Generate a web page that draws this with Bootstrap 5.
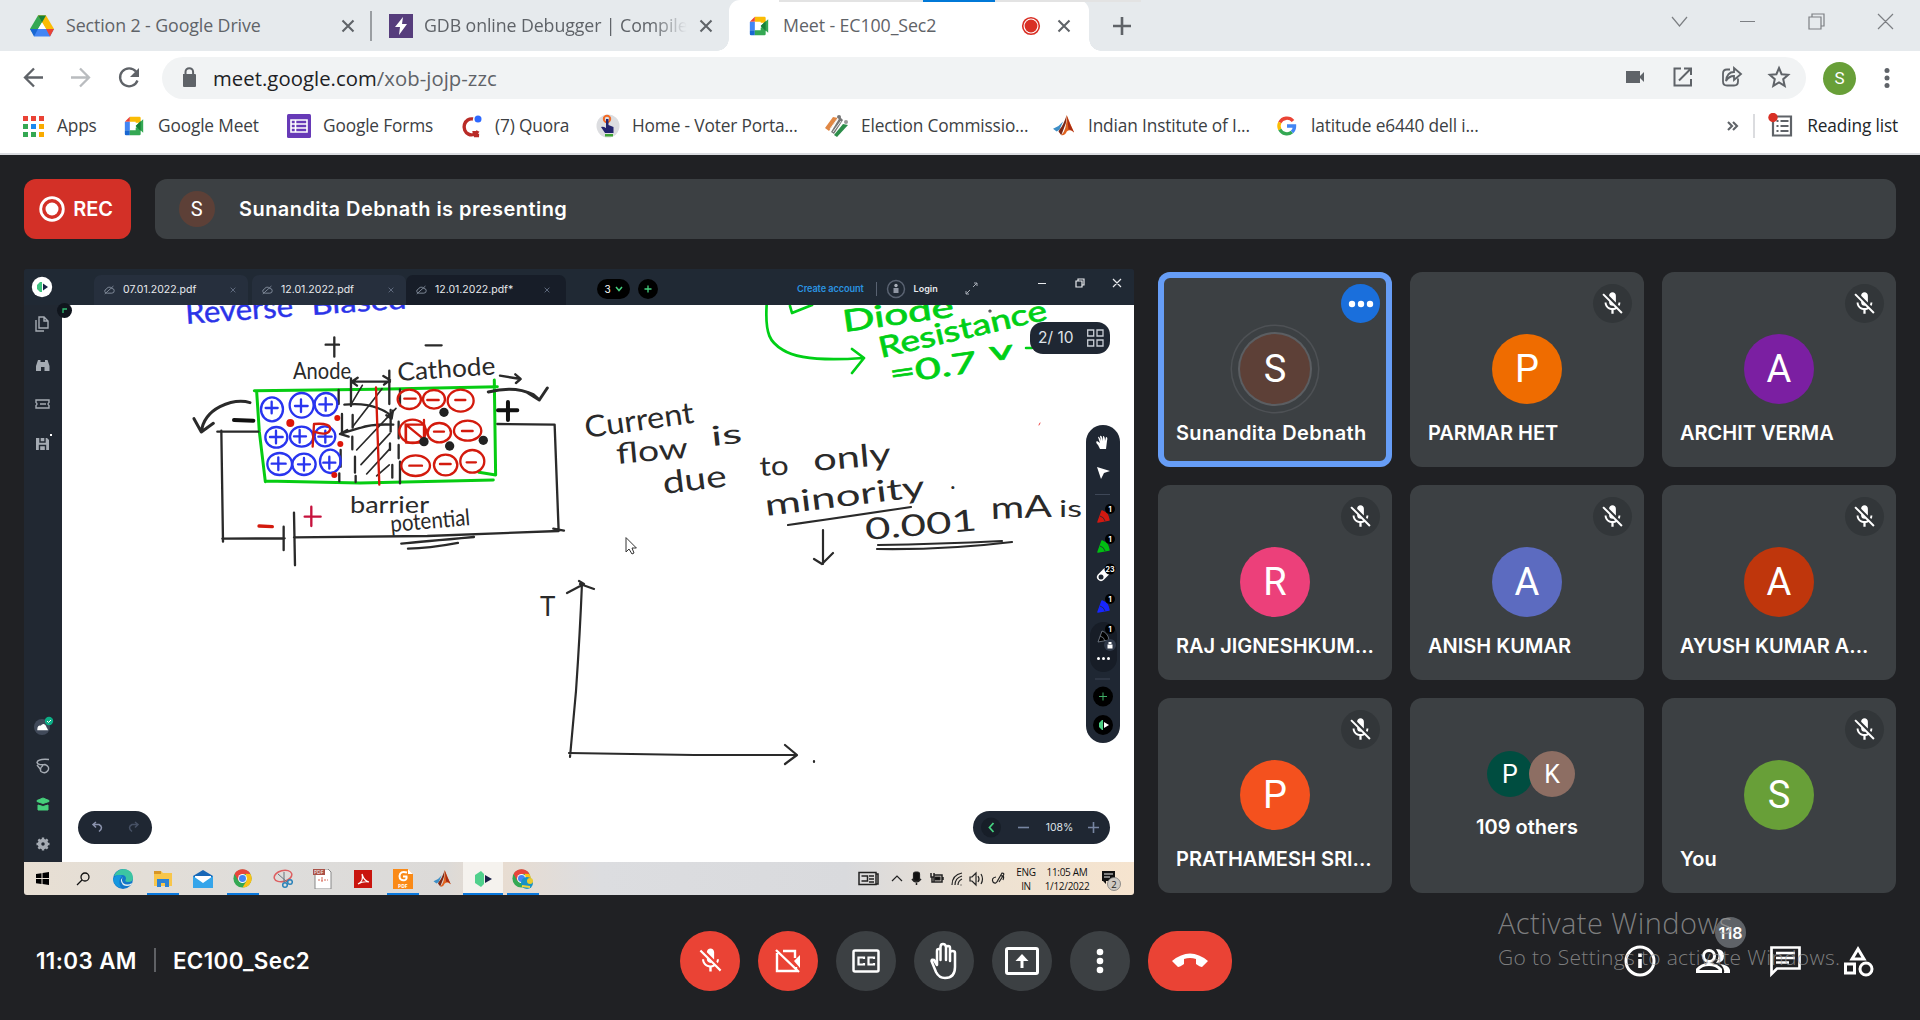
<!DOCTYPE html>
<html lang="en">
<head>
<meta charset="utf-8">
<title>Meet - EC100_Sec2</title>
<link href="https://cdn.jsdelivr.net/npm/bootstrap@5.3.0/dist/css/bootstrap.min.css" rel="stylesheet">
<style>
html,body{height:100%;overflow:hidden}
body{background:#202124;font-family:"Open Sans","Noto Sans",sans-serif;color:#fff}
svg{display:block;flex:none}
.screen{width:1920px;height:1020px}
/* browser chrome */
.tabstrip{height:51px;background:#e6eaed;color:#5f6368;font-size:17.8px;letter-spacing:-.1px}
.btab{height:51px;position:relative;white-space:nowrap}
.t1{width:372px;padding-left:30px}.t2{width:357px;padding-left:17px}
.t3{width:360px;padding-left:18px;background:#fff;border-radius:11px 11px 0 0}
.t3:before,.t3:after{content:"";position:absolute;bottom:0;width:12px;height:12px}
.t3:before{left:-12px;background:radial-gradient(circle at 0 0,#e6eaed 11.5px,#fff 12px)}
.t3:after{right:-12px;background:radial-gradient(circle at 100% 0,#e6eaed 11.5px,#fff 12px)}
.t1 .ttl{width:271px;margin-left:12px}.t2 .ttl{width:271px;margin-left:11px;overflow:hidden;-webkit-mask:linear-gradient(90deg,#000 84%,transparent 97%)}
.t3 .ttl{width:238px;margin-left:12px}
.vsep{width:2px;height:30px;background:#9a9ea2}
.sharebar{position:absolute;left:779px;top:0;width:362px;height:2px;background:linear-gradient(90deg,#e3e3e3 144px,#0078d7 144px,#0078d7 216px,#e3e3e3 216px)}
.toolbar{height:52px;background:#fff;color:#5f6368;padding-top:2px}
.omni{width:1644px;height:42px;border-radius:21px;background:#f1f3f4;font-size:20.3px;letter-spacing:.05px;white-space:nowrap}
.omni b{font-weight:400;color:#202124}
.s33{width:33px;height:33px;margin-left:17px;font:17px Roboto,sans-serif;background:#689f38}
.bmarks{height:52px;background:#fff;border-bottom:2px solid #dadce0;color:#3c4043;font-size:17.3px;letter-spacing:-.15px;padding-left:21px;padding-bottom:4px}
.bm{gap:12px;white-space:nowrap}
.bm:nth-child(1){width:101px}.bm:nth-child(2){width:165px}.bm:nth-child(3){width:172px}.bm:nth-child(4){width:137px}
.bm:nth-child(5){width:229px}.bm:nth-child(6){width:227px}.bm:nth-child(7){width:223px}.bm:nth-child(8){width:440px}
.rlist{margin-right:22px}
/* meeting */
.meet{height:865px;font-family:Inter,"Noto Sans",sans-serif}
.notice{height:60px;margin:24px 24px 0;gap:24px;font-size:20px;font-weight:600}
.rec{width:107px;border-radius:12px;background:#d33027;gap:8px;letter-spacing:-.1px;padding-right:3px}
.presenting{border-radius:12px;background:#3c4043;letter-spacing:.44px}
.s36{width:36px;height:36px;background:#5d4037;font:20px Roboto,sans-serif}
.stage{height:626px;margin:30px 24px 0}
.share{width:1110px;height:626px;background:#212832;color:#dfe3e8;border-radius:3px;overflow:hidden}
.apphead{height:36px;background:#202934}
.ftab{width:154px;height:30px;background:#262f3d;border-radius:7px 7px 0 0;font-size:10.5px;color:#e8eaed;padding:0 12px 0 10px}
.ftab.on{width:160px;background:#171d28}
.pill3{width:33px;height:20px;border-radius:10px;background:#000;font-size:10px;color:#fff;margin-left:31px}
.acct{margin-left:139px;font-size:9.200px;font-weight:600;color:#2a93e0;letter-spacing:-.1px}
.login{font-size:9px;font-weight:600;color:#e8eaed;margin-left:4px}
.rail{width:38px;height:557px;background:#212832;color:#a5abb3}
.board{width:1072px;height:557px;background:#fff;position:relative;overflow:hidden}
.board .ink{position:absolute;left:0;top:0}
.float{position:absolute;background:#1f2733;border-radius:18px;z-index:2}
.f-undo{left:16px;top:506px;width:74px;height:33px}
.f-zoom{left:911px;top:506px;width:137px;height:33px;font-size:10.5px}
.f-page{left:968px;top:17px;width:80px;height:32px;border-radius:13px;font-size:15.5px;letter-spacing:0}
.f-tools{left:1024px;top:120px;width:34px;height:318px}
.corner{position:absolute;left:33px;top:34px;width:15px;height:15px;background:#10151d;z-index:3}
.taskbar{height:33px;background:linear-gradient(90deg,#e8dfd3 0,#dedddb 22%,#dcdad8 38%,#e9dccf 42%,#dcdde0 52%,#d9dadd 74%,#eee2d2 88%,#f6e4cf 100%);color:#111;font:10px/14px "Open Sans",sans-serif}
.tb{width:40px;height:33px;position:relative}
.tb:first-child{width:37px;margin-right:1.500px}
.tb.run:after{content:"";position:absolute;left:4px;right:4px;bottom:0;height:2px;background:#0a78dd}
.tb.act{background:#f5f2ee}.tb.act:after{left:0;right:0}
.tray{letter-spacing:-.3px}
.lang{width:28px}.tm{width:54px}
/* people */
.tiles{width:738px;height:621px;margin-top:3px;display:grid;grid-template-columns:repeat(3,234px);grid-template-rows:repeat(3,195px);gap:18px}
.tile{background:#3c4043;border-radius:12px;position:relative}
.tile.talk{box-shadow:inset 0 0 0 6px #669df6}
.av{width:70px;height:70px;font:38px Roboto,sans-serif;margin-top:62px}
.talk .av{box-shadow:0 0 0 2px #5b5e62,0 0 0 8px #3c4043,0 0 0 9.5px #4e5155}
.talk .nm{letter-spacing:.36px}
.nm{position:absolute;left:18px;right:8px;top:146px;font-size:20px;line-height:30px;font-weight:600;white-space:nowrap}
.corn{position:absolute;right:12px;top:12px;width:39px;height:39px;background:#323639}
.pair{margin-top:53px;margin-left:4px}
.mini{width:46px;height:46px;font:25px Roboto,sans-serif;margin-right:-4px}
.oth{font-size:20px;font-weight:600;line-height:30px;margin-top:15px}
.c-brown{background:#5d4037}.c-orange{background:#ef6c00}.c-violet{background:#7b1fa2}.c-pink{background:#ec407a}.c-indigo{background:#5c6bc0}.c-rust{background:#bf360c}.c-deep{background:#f4511e}.c-green{background:#689f38}.c-teal{background:#004d40}.c-tan{background:#8d6e63}.c-blue{background:#1a6fdc}
/* call controls */
.callbar{height:125px;position:relative;padding-top:6px}
.clock{width:680px;padding-left:36px;font-size:22.4px;font-weight:600;letter-spacing:.4px}
.ctrls{gap:18px}
.ctl{width:60px;height:60px;background:#3c4043}
.ctl.off{background:#ea4335}
.hang{width:84px;height:60px;border-radius:29px;background:#ea4335}
.side{width:251px;margin-right:46px;gap:38px}
.cnt{position:absolute;left:1715px;top:22px;width:31px;height:31px;background:#5f6368;font-size:16px;font-weight:600}
.wm{position:absolute;left:1498px;top:6px;color:rgba(158,158,158,.76);font-family:"Open Sans",sans-serif;font-weight:300;z-index:5;white-space:nowrap}
.wm1{font-size:29px;line-height:44px;letter-spacing:.45px}.wm2{font-size:21px;line-height:24px;letter-spacing:.32px}
.hw{font-family:Lato,"Open Sans",sans-serif}
</style>
<script src="https://cdn.jsdelivr.net/npm/bootstrap@5.3.0/dist/js/bootstrap.bundle.min.js"></script>
</head>
<body>
<svg width="0" height="0" class="position-absolute">
<defs>
<symbol id="x" viewBox="0 0 14 14"><path d="M1.5 1.5l11 11m0-11l-11 11" stroke="currentColor" stroke-width="2.1" fill="none"/></symbol>
<symbol id="gmeet" viewBox="0 0 24 24"><path d="M7 1h11.500q1.500 0 1.500 1.500V8h-6V7H7z" fill="#fbbc04"/><path d="M7 1v6H1z" fill="#ea4335"/><path d="M1 7h6v10H1z" fill="#4285f4"/><path d="M1 17h6v6H2.500Q1 23 1 21.500z" fill="#1967d2"/><path d="M7 17h7v-3l4-2 2 3v6.500q0 1.500-1.500 1.500H7z" fill="#34a853"/><path d="M14 12l9-8v16z" fill="#34a853"/><path d="M14 12l6-6v12z" fill="#188038"/></symbol>
<symbol id="micoff" viewBox="0 0 24 24"><path fill="currentColor" d="M19 11h-1.700c0 .74-.16 1.430-.43 2.050l1.230 1.230c.56-.98.9-2.090.9-3.280zm-4.020.170c0-.060.020-.11.020-.170V5c0-1.660-1.340-3-3-3S9 3.340 9 5v.180l5.980 5.990zM4.270 3L3 4.270l6.010 6.010V11c0 1.660 1.330 3 2.990 3 .22 0 .44-.030.65-.080l1.660 1.660c-.71.330-1.500.52-2.310.52-2.760 0-5.300-2.100-5.300-5.100H5c0 3.410 2.720 6.230 6 6.720V21h2v-3.280c.91-.13 1.770-.45 2.540-.9L19.730 21 21 19.730 4.270 3z"/></symbol>
<symbol id="matlab" viewBox="0 0 24 24"><path d="M0 15l6-3 5-5-4 9-3 2z" fill="#3d8fc7"/><path d="M7 16q4-4 8-16l-1 9-5 13-3-4z" fill="#7c2817"/><path d="M9 22q6-5 6-22 3 8 8 19-4-4-8-1-2 5-6 4z" fill="#e0621f"/><path d="M15 1q3 8 8 18-4-4-6-3z" fill="#a92c13"/></symbol>
<symbol id="chrome" viewBox="0 0 24 24"><circle cx="12" cy="12" r="11.500" fill="#34a853"/><path d="M2 6.200A11.500 11.500 0 0122 6.200H12L7 15z" fill="#e8453c"/><path d="M22 6.200A11.500 11.500 0 0112 23.500l5-8.500-1-9z" fill="#fbc116"/><circle cx="12" cy="12" r="5.600" fill="#fff"/><circle cx="12" cy="12" r="4.400" fill="#4285f4"/></symbol>
<symbol id="cloudoff" viewBox="0 0 14 12"><path d="M4 10h6a3 3 0 000-6 4 4 0 00-7 1 2.500 2.500 0 001 5zM1 11L12 1" fill="none" stroke="#8b95a5" stroke-width="1.100"/></symbol>
</defs></svg>

<div class="screen d-flex flex-column">
<header class="position-relative">
 <div class="tabstrip d-flex align-items-center">
  <div class="btab t1 d-flex align-items-center">
   <svg width="24" height="22" viewBox="0 0 24 21"><path d="M8 0h8L4.500 20 0 13.500z" fill="#34a853"/><path d="M8 0h8l8 13.500h-8z" fill="#fbbc04"/><path d="M8 0h8l-4 7z" fill="#188038"/><path d="M4.500 13.500H24L20 21H4z" fill="#4285f4"/><path d="M16 13.500h8L20 21z" fill="#ea4335"/><path d="M0 13.500h8L4 21z" fill="#1967d2"/><path d="M12 7l4 6.500H8z" fill="#fff"/></svg>
   <span class="ttl">Section 2 - Google Drive</span>
   <svg class="ms-1" width="14" height="14"><use href="#x"/></svg><span class="vsep ms-auto"></span>
  </div>
  <div class="btab t2 d-flex align-items-center">
   <svg width="24" height="24"><path d="M0 0h24v24H0z" fill="#563d7c"/><path d="M14 3L6 13h5l-1 8 8-11h-5z" fill="#fff"/></svg>
   <span class="ttl">GDB online Debugger | Compiler</span>
   <svg class="ms-1" width="14" height="14"><use href="#x"/></svg>
  </div>
  <div class="btab t3 d-flex align-items-center">
   <svg width="24" height="20"><use href="#gmeet"/></svg><span class="ttl">Meet - EC100_Sec2</span>
   <svg width="20" height="20"><circle cx="10" cy="10" r="8.300" fill="#fff" stroke="#d93025" stroke-width="1.600"/><circle cx="10" cy="10" r="6.400" fill="#d93025"/></svg>
   <svg class="ms-3" width="14" height="14"><use href="#x"/></svg>
  </div>
  <svg class="ms-4" width="18" height="18"><path d="M9 0v18M0 9h18" stroke="#5f6368" stroke-width="2.600"/></svg>
  <svg class="ms-auto me-3" width="240" height="30" fill="none" stroke="#7c7f83" stroke-width="1.200"><path d="M8 6l7.500 9L23 6M76 10.500h15M145 6h12v12h-12zM148 6V3h12v12h-3M214 3l15 15M229 3l-15 15"/></svg>
 </div>
 <div class="sharebar"></div>
 <div class="toolbar d-flex align-items-center">
  <svg width="162" height="42" fill="none" stroke="#5f6368" stroke-width="2.300"><path d="M43 20.500H25m9-9l-9 9 9 9"/><path d="M71 20.500h18m-9-9l9 9-9 9" stroke="#b9bcbf"/><path d="M136 14.500a9 9 0 10 1.500 9"/><path d="M139 11v9h-9z" fill="#5f6368" stroke="none"/></svg>
  <div class="omni d-flex align-items-center">
   <svg width="51" height="42"><path d="M21 17h12q1 0 1 1v11q0 1-1 1H22q-1 0-1-1z" fill="#5f6368"/><path d="M23.500 18v-3a3.800 3.800 0 017.600 0v3" fill="none" stroke="#5f6368" stroke-width="2"/></svg>
   <span><b>meet.google.com</b>/xob-jojp-zzc</span>
   <svg class="ms-auto" width="190" height="42" fill="none" stroke="#5f6368" stroke-width="2"><path d="M10 14h14v5l4-4v10l-4-4v5H10z" fill="#5f6368" stroke="none"/><path d="M65 11.500h-6.500v17H75V22M68 11.500h7V18M75 11.500l-12 12"/><path d="M114 12.500h-3q-4 0-4 4v8q0 4 4 4h7q4 0 4-4v-3M110 24q1-9 8-9v-4l7 6-7 6v-4q-5 0-8 5z" stroke-width="1.800"/><path d="M163 11l2.600 6.200 6.600.6-5 4.400 1.500 6.600-5.700-3.500-5.700 3.500 1.500-6.600-5-4.400 6.600-.6z"/></svg>
  </div>
  <div class="s33 rounded-circle d-flex align-items-center justify-content-center text-white">S</div>
  <svg class="ms-4" width="16" height="24" fill="#5f6368"><circle cx="7" cy="4.500" r="2.500"/><circle cx="7" cy="12" r="2.500"/><circle cx="7" cy="19.500" r="2.500"/></svg>
 </div>
 <nav class="bmarks d-flex align-items-center">
  <div class="bm d-flex align-items-center"><svg width="24" height="22"><path d="M2 1h5v5H2zM10 1h5v5h-5zM18 1h5v5h-5z" fill="#ea4335"/><path d="M2 9h5v5H2zM2 17h5v5H2zM10 17h5v5h-5z" fill="#34a853"/><path d="M10 9h5v5h-5z" fill="#1a88f0"/><path d="M18 9h5v5h-5zM18 17h5v5h-5z" fill="#f9ab00"/></svg>Apps</div>
  <div class="bm d-flex align-items-center"><svg width="24" height="20"><use href="#gmeet"/></svg>Google Meet</div>
  <div class="bm d-flex align-items-center"><svg width="24" height="24"><rect width="24" height="24" rx="1.500" fill="#673ab7"/><path d="M4 6h16v12H4zM4 10h16M4 14h16M8.500 6v12" fill="none" stroke="#fff" stroke-width="1.600"/></svg>Google Forms</div>
  <div class="bm d-flex align-items-center"><svg width="24" height="24"><path d="M14 5A7.500 8 0 1019 17M15 17q0 4 5 4.500h-5" fill="none" stroke="#b92b27" stroke-width="3.400"/><circle cx="19" cy="5" r="3.500" fill="#2e69ff"/></svg>(7) Quora</div>
  <div class="bm d-flex align-items-center"><svg width="24" height="24"><circle cx="12" cy="12" r="11.500" fill="#dcdde0"/><circle cx="11" cy="5" r="3.200" fill="none" stroke="#f26a25" stroke-width="2"/><path d="M10 5h2.500v6l5 2v6H9l-4-6q2-1 5 1z" fill="#23246e"/><path d="M9 20h8v2.500H9z" fill="#3fa535"/></svg>Home - Voter Porta...</div>
  <div class="bm d-flex align-items-center"><svg width="24" height="24"><path d="M0 14L8 3l5 1-9 13z" fill="#e08744"/><path d="M6 18L15 3l3 3-9 14z" fill="#777"/><path d="M9 21l9-11 5 1-11 12z" fill="#2c8d4a"/><circle cx="14" cy="3" r="2" fill="#777"/><circle cx="21" cy="8" r="2" fill="#999"/><path d="M5 15L13 4M8 18l8-11" stroke="#eee"/></svg>Election Commissio...</div>
  <div class="bm d-flex align-items-center"><svg width="24" height="22"><use href="#matlab"/></svg>Indian Institute of I...</div>
  <div class="bm d-flex align-items-center"><svg width="24" height="20" viewBox="0 0 24 20" fill="none" stroke-width="3.400"><path d="M18 5a8 8 0 00-13.200 1.500" stroke="#ea4335"/><path d="M4.800 6.500a8 8 0 000 7" stroke="#fbbc04"/><path d="M4.800 13.500A8 8 0 0017 16" stroke="#34a853"/><path d="M17 16a8 8 0 002.500-6H12" stroke="#4285f4"/></svg>latitude e6440 dell i...</div>
  <svg width="38" height="24" fill="none" stroke="#5f6368" stroke-width="2.100"><path d="M13 8l4 4-4 4M18 8l4 4-4 4"/></svg>
  <svg width="42" height="26"><path d="M1 1v24" stroke="#cfd1d4" stroke-width="1.500"/><path d="M20 3.500h18v19H20z" fill="none" stroke="#5f6368" stroke-width="2.200"/><path d="M23.500 8h2m2 0h8M23.500 13h2m2 0h8M23.500 18h2m2 0h8" stroke="#5f6368" stroke-width="2"/><circle cx="20" cy="4.500" r="4.700" fill="#d93025"/></svg>
  <span class="rlist ms-auto text-dark">Reading list</span>
 </nav>
</header>

<main class="meet d-flex flex-column">
 <div class="notice d-flex">
  <div class="rec d-flex align-items-center justify-content-center"><svg width="26" height="26"><circle cx="13" cy="13" r="11.300" fill="none" stroke="#fff" stroke-width="2.800"/><circle cx="13" cy="13" r="6.500" fill="#fff"/></svg>REC</div>
  <div class="presenting d-flex align-items-center flex-grow-1 ps-4"><span class="s36 rounded-circle d-flex align-items-center justify-content-center">S</span><span class="ms-4">Sunandita Debnath is presenting</span></div>
 </div>
 <div class="stage d-flex justify-content-between">
  <section class="share d-flex flex-column position-relative">
   <div class="apphead d-flex align-items-end">
    <svg width="70" height="36"><circle cx="18" cy="18" r="10.200" fill="#fff"/><path d="M13 16l3-3h2v10h-2l-3-3z" fill="#3fc380"/><path d="M19 14.500l5 3.500-5 3.500z" fill="#172044"/></svg>
    <div class="ftab d-flex align-items-center"><svg class="me-2" width="11" height="10"><use href="#cloudoff"/></svg>07.01.2022.pdf<svg class="ms-auto" width="6" height="6" color="#657184"><use href="#x"/></svg></div>
    <div class="ftab d-flex align-items-center ms-1"><svg class="me-2" width="11" height="10"><use href="#cloudoff"/></svg>12.01.2022.pdf<svg class="ms-auto" width="6" height="6" color="#657184"><use href="#x"/></svg></div>
    <div class="ftab on d-flex align-items-center"><svg class="me-2" width="11" height="10"><use href="#cloudoff"/></svg>12.01.2022.pdf*<svg class="ms-auto me-1" width="6" height="6" color="#657184"><use href="#x"/></svg></div>
    <div class="d-flex align-items-center flex-grow-1 h-100 pt-1">
     <span class="pill3 d-flex align-items-center justify-content-center">3<svg class="ms-1" width="8" height="6"><path d="M1 1l3 3.500L7 1" fill="none" stroke="#46d17f" stroke-width="1.500"/></svg></span>
     <svg class="ms-2" width="20" height="20"><circle cx="10" cy="10" r="10"/><path d="M10 6.500v7M6.500 10h7" stroke="#46d17f" stroke-width="1.300"/></svg>
     <span class="acct">Create account</span>
     <svg width="46" height="24" fill="none" stroke="#596271"><path d="M12.500 5v14"/><circle cx="32" cy="12" r="8.500" stroke-width="1.500"/><circle cx="32" cy="8.500" r="1.700" fill="#aab0ba" stroke="none"/><path d="M29.500 16v-5h5v5z" fill="#8f96a3" stroke="none"/></svg>
     <span class="login">Login</span>
     <svg class="ms-auto" width="184" height="36" fill="none" stroke="#a7adb6"><path d="M23 16l4-4m-3 0h3v3M20 19l-4 4m3 0h-3v-3"/><path stroke="#e8eaed" d="M88 12.500h8M126 10h6v6h-6zM128 10V8h6v6h-2M163 8l8 8m0-8l-8 8" stroke-width="1.200"/></svg>
    </div>
   </div>
   <div class="d-flex">
    <svg class="rail" viewBox="0 0 38 557" fill="none" stroke="#a5abb3" stroke-width="1.400"><path d="M12 15v11h8M15 12h5l4 4v7h-9zM20 12v4h4"/><path d="M14 55h2.500v2H21v-2h2.500l2 6v5h-5v-4h-3.500v4h-5v-5z" fill="#a5abb3" stroke="none"/><path d="M12 95h13v2.500q-2 1.500 0 3v2.500H12v-2.500q2-1.500 0-3zM16 99h6"/><path d="M12 133h11l2 2v10H12z" fill="#a5abb3" stroke="none"/><path d="M16 133v4h5v-4M15.500 145v-4.500h6v4.500" stroke="#212832"/><path d="M26 130h2" stroke="#fff" stroke-width="1.800"/>
    <circle cx="18" cy="422" r="8" fill="#414a5a" stroke="none"/><path d="M14 424.500q0-4 3-3 3-4 5 1l1 2z" fill="#fff" stroke="#fff"/><circle cx="25" cy="416" r="4.200" fill="#0cae86" stroke="none"/><path d="M23 416l1.500 1.500L27 415" stroke="#fff" stroke-width="1"/><path d="M25 454.500q-11-1-12 3 1 3 8 2 5 2 3 6-3 4-7 1-2-3 2-6M13 460l4 5" /><path d="M13 495.500l6-2.500 6 2.500v1l-6 2-6-2zM14 500l5 1.500 5-1.500v5H14z" fill="#46cf7b" stroke="#46cf7b" stroke-width="1"/><circle cx="19" cy="539" r="3.500" stroke-width="3.500"/><path d="M19 532.500v3M19 542.500v3M12.500 539h3M22.500 539h3M14.400 534.400l2 2M21.600 541.600l2 2M23.600 534.400l-2 2M14.400 543.600l2-2" stroke-width="2.400"/></svg>
    <div class="board">
     <svg class="ink" width="1072" height="557" viewBox="62 305 1072 557" fill="none" stroke="#2a2a2a" stroke-width="2.200" stroke-linecap="round" stroke-linejoin="round">
      <g class="hw" stroke="none">
       <g fill="#2b33e8" stroke="#2b33e8" stroke-width=".4"><text transform="translate(186 324) rotate(-4)" font-size="30" textLength="108" lengthAdjust="spacingAndGlyphs">Reverse</text><text transform="translate(312 315) rotate(-4)" font-size="27" textLength="95" lengthAdjust="spacingAndGlyphs">Biased</text></g>
       <g fill="#2a2a2a"><text x="293" y="379" font-size="23" textLength="58" lengthAdjust="spacingAndGlyphs">Anode</text><text transform="translate(398 381) rotate(-4)" font-size="25" textLength="98" lengthAdjust="spacingAndGlyphs">Cathode</text><text x="350" y="513" font-size="24" textLength="79" lengthAdjust="spacingAndGlyphs">barrier</text><text transform="translate(391 532) rotate(-5)" font-size="23" textLength="80" lengthAdjust="spacingAndGlyphs">potential</text>
       <text transform="translate(586 438) rotate(-8)" font-size="30" textLength="110" lengthAdjust="spacingAndGlyphs">Current</text><text transform="translate(617 464) rotate(-5)" font-size="29" textLength="72" lengthAdjust="spacingAndGlyphs">flow</text><text transform="translate(712 446) rotate(-6)" font-size="27" textLength="31" lengthAdjust="spacingAndGlyphs">is</text><text transform="translate(664 494) rotate(-7)" font-size="31" textLength="64" lengthAdjust="spacingAndGlyphs">due</text><text transform="translate(760 476) rotate(-3)" font-size="27" textLength="29" lengthAdjust="spacingAndGlyphs">to</text><text transform="translate(814 471) rotate(-5)" font-size="31" textLength="78" lengthAdjust="spacingAndGlyphs">only</text><text transform="translate(766 516) rotate(-7)" font-size="30" textLength="161" lengthAdjust="spacingAndGlyphs">minority</text><text x="950" y="489" font-size="24">.</text><text transform="translate(866 540) rotate(-5)" font-size="30" textLength="112" lengthAdjust="spacingAndGlyphs">0.001</text><text transform="translate(991 519) rotate(-2)" font-size="31" textLength="61" lengthAdjust="spacingAndGlyphs">mA</text><text x="1059" y="517" font-size="24" textLength="23" lengthAdjust="spacingAndGlyphs">is</text><text x="540" y="616" font-size="26">T</text></g>
       <g fill="#00cf16" stroke="#00cf16" stroke-width=".7"><text transform="translate(844 332) rotate(-8)" font-size="30" textLength="112" lengthAdjust="spacingAndGlyphs">Diode</text><text transform="translate(881 358) rotate(-13)" font-size="29" textLength="172" lengthAdjust="spacingAndGlyphs">Resistance</text><text transform="translate(891 384) rotate(-8)" font-size="29" textLength="88" lengthAdjust="spacingAndGlyphs">=0.7</text><text transform="translate(990 361) rotate(-6)" font-size="27" textLength="24" lengthAdjust="spacingAndGlyphs">v</text></g>
      </g>
      <!-- diode block and circuit -->
      <g transform="translate(160 300) scale(.3333)" stroke-width="7">
       <path d="M283 272L650 268 1012 260M290 275l8 120 18 150M316 543L600 549 1000 540M1003 240l4 285-50-8" stroke="#06cc12" stroke-width="9"/>
       <path d="M497 134h40M523 112v58M797 136h48M1020 227l62 10-16-14M1082 237l-14 12M573 235v83M575 245h115M575 245l18-12M575 245l16 12M690 240l-20-12M690 240l-18 14M688 212v100M536 270v42M546 342v60M542 450v50M538 520v24M578 345v38M577 410v38M585 470v48M587 528v18M720 268v48M692 330v65M716 365v50M690 430v20M716 435v40M697 495v38M720 485v65"/>
       <path d="M575 310l32-54M578 380l88-114M590 450L708 325M603 494L690 400M620 522L690 446M650 528L688 495" stroke-width="5"/>
       <path d="M553 314q60-6 100 10 40 15 42 32l-16-10M695 356l4-24M700 374q-65-3-100 10l-60 18 22-12M540 402l26 8"/>
       <path d="M270 308q-40-12-90 12-50 26-56 76l-22-40M124 396l36-26M985 276q80-20 135 8l18 16-38-24M1138 300l24-36" stroke-width="9"/>
       <path d="M222 360l58 2M1014 331h58M1044 306v54" stroke="#111" stroke-width="12"/>
       <path d="M295 395H172M184 392l5 333M187 716l187-1M371 680v70M402 638l3 158M402 712l400-4 394-15M1012 372l172 2 12 318M1180 686l32 6M724 731q60-6 218-20M744 746q60 0 150-17"/>
       <g stroke="#2935ef"><ellipse cx="336" cy="328" rx="33" ry="36"/><ellipse cx="425" cy="316" rx="36" ry="37"/><ellipse cx="498" cy="313" rx="34" ry="34"/><ellipse cx="349" cy="412" rx="33" ry="31"/><ellipse cx="425" cy="410" rx="35" ry="30"/><ellipse cx="495" cy="409" rx="31" ry="30"/><ellipse cx="359" cy="492" rx="37" ry="33"/><ellipse cx="432" cy="493" rx="35" ry="32"/><ellipse cx="511" cy="484" rx="31" ry="35"/>
       <path d="M317 324h36M335 305v35M405 318h38M423 298v38M478 313h38M497 294v38M330 411h38M348 392v38M402 409h36M419 390v38M475 410h40M496 392v36M335 491h42M355 472v38M414 493h36M432 474v38M490 488h36M508 470v36"/></g>
       <g stroke="#d31a0d"><ellipse cx="748" cy="298" rx="35" ry="29"/><ellipse cx="822" cy="298" rx="33" ry="28"/><ellipse cx="902" cy="302" rx="39" ry="33"/><ellipse cx="758" cy="394" rx="40" ry="35"/><ellipse cx="838" cy="398" rx="35" ry="29"/><ellipse cx="923" cy="392" rx="41" ry="30"/><ellipse cx="767" cy="497" rx="43" ry="31"/><ellipse cx="857" cy="495" rx="35" ry="31"/><ellipse cx="937" cy="484" rx="36" ry="34"/><path d="M733 296h34M802 300h34M886 300h30M822 395h30M906 393h32M748 497h38M840 492h32M920 487h28M737 425v-52l55 45v-58M738 374h55v54h-55zM648 262l10 292M458 440l4-68q54-4 48 18-8 18-46 6"/></g>
       <path d="M434 650h48M454 620v58" stroke="#c6123d" stroke-width="7"/><path d="M297 678l40 2" stroke="#d31a0d" stroke-width="10"/>
       <g fill="#dd150a" stroke="none"><circle cx="391" cy="369" r="12"/><circle cx="532" cy="354" r="9"/><circle cx="541" cy="432" r="9"/><circle cx="523" cy="525" r="9"/></g>
       <g fill="#222" stroke="none"><circle cx="852" cy="337" r="14"/><circle cx="792" cy="425" r="14"/><circle cx="869" cy="438" r="14"/><circle cx="970" cy="421" r="14"/></g>
      </g>
      <!-- rule lines, arrows and axes -->
      <path d="M788 525q50-7 123-18M823 530v34M814 559l8 5 11-11M877 549q70 1 135-7M878 545q60-1 124-4"/>
      <path d="M767 300c-3 36 4 43 16 50 14 9 40 11 80 8M852 349l12 9-12 15M790 306l2 7 20-8" stroke="#00cf16" stroke-width="2.700"/><path d="M1026 348h6" stroke="#00cf16" stroke-width="2.500"/>
      <path d="M582 583q-2 50-6 108l-6 66M567 593l17-9-5-3M580 584l14 5M569 753l125 2 101 0M785 745l12 10-12 9M814 761v1"/>
      <path d="M626 538v14l3-3 3 5 2-1-2-5h4z" fill="#fff" stroke="#333" stroke-width="1"/><path d="M1039 425l1-2" stroke="#e44" stroke-width="1"/><circle cx="990" cy="311" r=".5"/>
     </svg>
     <div class="float f-undo"><svg width="74" height="33" fill="none" stroke="#8b93ad" stroke-width="1.500"><path d="M16 13.500h5q5 3 0 7M18 11l-3 2.500 3 3"/><path d="M59 13.500h-5q-5 3 0 7M57 11l3 2.500-3 3" stroke="#465064"/></svg></div>
     <div class="float f-zoom d-flex align-items-center"><svg width="64" height="33" fill="none"><circle cx="18" cy="16.500" r="10" fill="#171e28"/><path d="M20.500 12l-4 4.500 4 4.500" stroke="#46d17f" stroke-width="1.800"/><path d="M45 16.500h11" stroke="#7785a2" stroke-width="1.600"/></svg><span class="ms-auto">108%</span><svg class="ms-auto" width="28" height="33"><path d="M6 16.500h11M11.500 11v11" stroke="#7785a2" stroke-width="1.600"/></svg></div>
     <div class="float f-page d-flex align-items-center justify-content-between ps-2"><span>2/ 10</span><svg class="me-1" width="19" height="18" fill="none" stroke="#c9ced6" stroke-width="1.300"><path d="M.7 1h6v6h-6zM10 1h6v6h-6zM.7 11h6v6h-6zM10 11h6v6h-6z"/></svg></div>
     <div class="float f-tools"><svg width="34" height="318" viewBox="0 0 34 318">
      <path d="M12 20q-3-3-1-4l3 2-2-6q1-1 3 4l-1-5q2-1 3 5V11q2 0 2 5l1-4q2 0 1 4l-1 8h-6z" fill="#fff"/><path d="M11 42l13 4-6 2-3 6z" fill="#fff"/><path d="M9 69.500h15M9 254h15" stroke="#3e4757"/>
      <g stroke-width="1.500" stroke-linejoin="round"><path d="M16 86q6 2 7 9l-11 2z" fill="#d21911" stroke="#d21911"/><path d="M16 116q6 2 7 9l-11 2z" fill="#00be12" stroke="#00be12"/><path d="M16 176q6 2 7 9l-11 2z" fill="#1726ff" stroke="#1726ff"/></g>
      <path d="M14 91q4 1 5 5M14 121q4 1 5 5M14 181q4 1 5 5" fill="none" stroke="#1f2733" stroke-width=".8"/>
      <path d="M15 152l5-5" stroke="#fff" stroke-width="8" stroke-linecap="round"/><circle cx="15" cy="152" r="2.500" fill="#1f2733"/>
      <rect x="4" y="197" width="27" height="50" rx="13.500" fill="#171d27"/><path d="M16 206q6 2 7 9l-11 2zM14 211q4 1 5 5" fill="#000" stroke="#7b8491" stroke-width=".8"/>
      <g fill="#000"><circle cx="24" cy="84" r="5"/><circle cx="24" cy="114" r="5"/><circle cx="24" cy="144" r="5.500"/><circle cx="24" cy="174" r="5"/><circle cx="24" cy="204" r="5"/></g>
      <g fill="#fff" font-family="Inter,sans-serif" font-size="7" font-weight="700" text-anchor="middle"><text x="24" y="86.500">1</text><text x="24" y="116.500">1</text><text x="24" y="146.500">23</text><text x="24" y="176.500">1</text><text x="24" y="206.500">1</text></g>
      <circle cx="24" cy="220" r="6" fill="#303949"/><path d="M21.500 219.500h5v4h-5zM22.500 219v-2h3v2" fill="#fff"/>
      <g fill="#fff"><circle cx="12.500" cy="233.500" r="1.500"/><circle cx="17.500" cy="233.500" r="1.500"/><circle cx="22.500" cy="233.500" r="1.500"/></g>
      <circle cx="17" cy="271.500" r="10"/><path d="M13 271.500h8M17 267.500v8" stroke="#3fae66"/><circle cx="17" cy="300" r="10"/><path d="M13 298l3-3h1v10h-1l-3-3z" fill="#4bd083"/><path d="M18 297l5 3-5 3z" fill="#fff"/></svg></div>
    </div>
   </div>
   <div class="corner rounded-circle"><svg width="15" height="15"><path d="M6 10V6h4" fill="none" stroke="#2fbf71" stroke-width="1.300"/></svg></div>
   <div class="taskbar d-flex align-items-center">
    <div class="tb d-flex align-items-center justify-content-center"><svg width="13" height="13"><path d="M0 2l5.500-.8V6H0zM6.500 1L13 0v6H6.500zM0 7h5.500v5L0 11.200zM6.500 7H13v6l-6.500-1z"/></svg></div>
    <div class="tb d-flex align-items-center justify-content-center"><svg width="14" height="14" fill="none" stroke="#111" stroke-width="1.300"><circle cx="9" cy="5" r="4"/><path d="M6 8l-5 5"/></svg></div>
    <div class="tb d-flex align-items-center justify-content-center"><svg width="20" height="20"><circle cx="10" cy="10" r="10" fill="#1377c9"/><path d="M1 7Q4 0 11 0q9 1 9 9 0 4-5 4-4 0-2-3 0-4-4-4-5 0-8 1z" fill="#3cc5a2"/><path d="M12 7q-5 2-2 7 4 3 9 0l-1 2q-4 2-8 0-5-6 2-9z" fill="#e5eef0"/><path d="M0 10q4-6 9-3-5 4-1 12-7-2-8-9z" fill="#1597df"/></svg></div>
    <div class="tb run d-flex align-items-center justify-content-center"><svg width="18" height="18"><path d="M0 1h7l2 2h9v13H0z" fill="#f8c64a"/><path d="M0 1h7v3H0z" fill="#d89625"/><path d="M3 17V9h12v8h-4v-4H7v4z" fill="#2c82d4"/></svg></div>
    <div class="tb d-flex align-items-center justify-content-center"><svg width="20" height="18"><path d="M0 6l10-6 10 6v12H0z" fill="#1867b7"/><path d="M2 6h16v8H2z" fill="#fff"/><path d="M0 6l10 7 10-7v12H0z" fill="#35a5ea"/></svg></div>
    <div class="tb run d-flex align-items-center justify-content-center"><svg width="19" height="19"><use href="#chrome"/></svg></div>
    <div class="tb d-flex align-items-center justify-content-center"><svg width="20" height="20" fill="none"><ellipse cx="10" cy="7" rx="9" ry="5.500" stroke="#dd5f61" stroke-width="1.500" transform="rotate(-15 10 7)"/><path d="M5 5l9 8M11 3v10" stroke="#68747f"/><circle cx="12" cy="16" r="2.300" stroke="#2982b9" stroke-width="1.500"/><circle cx="17" cy="13" r="2.300" stroke="#2982b9" stroke-width="1.500"/></svg></div>
    <div class="tb d-flex align-items-center justify-content-center"><svg width="20" height="20"><path d="M2 0h13l3 3v17H2z" fill="#fff" stroke="#888"/><path d="M0 0h12v6H0z" fill="#a95046"/><text x="1" y="5.300" font-size="5" fill="#fff">PDF</text><path d="M5 11h10M9 8v6" stroke="#d56858" stroke-dasharray="2 1"/></svg></div>
    <div class="tb d-flex align-items-center justify-content-center"><svg width="18" height="18"><path d="M0 0h18v18H0z" fill="#c9150e"/><path d="M4 14q6-3 4-10 2 7 7 8-6-1-11 2z" fill="none" stroke="#fff" stroke-width="1.200"/></svg></div>
    <div class="tb run d-flex align-items-center justify-content-center"><svg width="20" height="20"><path d="M0 0h15l5 5v15H0z" fill="#fa8a17"/><path d="M15 0v5h5z" fill="#fff"/><path d="M14 3.500q-7-2-7.500 3.500 0 5 5.500 4 2-.5 1.500-3.500H10" fill="none" stroke="#fff" stroke-width="2"/><text x="5" y="18.500" font-size="5" font-weight="700" fill="#fff">PDF</text></svg></div>
    <div class="tb d-flex align-items-center justify-content-center"><svg width="19" height="18"><use href="#matlab"/></svg></div>
    <div class="tb run act d-flex align-items-center justify-content-center"><svg width="18" height="16"><path d="M1 4l6-4 3 3v10l-3 3-6-4z" fill="#50d08c"/><path d="M11 4l7 4-7 4z" fill="#172047"/></svg></div>
    <div class="tb run d-flex align-items-center justify-content-center"><svg width="22" height="20"><svg width="19" height="19"><use href="#chrome"/></svg><circle cx="15" cy="14" r="6" fill="#1893c6"/><circle cx="18" cy="12" r="3" fill="#eacb2f"/><path d="M10 17l8 1" stroke="#f2d338" stroke-width="2"/></svg></div>
    <svg class="ms-auto" width="156" height="33" viewBox="856 862 156 33" fill="none" stroke="#222" stroke-width="1.200"><path d="M859 872.500h17v12h-17zM876 874h2v10h-2M861.500 876h6v5h-6M869 876h5M869 879h5M869 882h5" stroke-width="1.500"/><path d="M892 881l5-5 5 5"/><rect x="913.500" y="872" width="6" height="9" rx="2" fill="#111"/><path d="M912 879q4 6 9 0M916.500 883v2" stroke-width="1.500"/><path d="M934 875h8v7h-8zM943 877v3M931 873v4h3v-4M932 877v5h3" stroke-width="1.500"/><path d="M935 877h5v3h-5z" fill="#111"/><path d="M952 885q0-10 10-12M955 885q0-7 7-9M958 885q0-4 4-6M960.500 885h1"/><path d="M970 877h2l4-4v12l-4-4h-2zM978 876q2 3 0 6M981 874q3 5 0 10"/><path d="M996 877q-5 1-3 5 3 3 5-2l4-7q3 0 1 3l-4 6M1001 876q4-1 2 4"/></svg>
    <div class="tray d-flex text-center"><div class="lang">ENG<br>IN</div><div class="tm">11:05 AM<br>1/12/2022</div></div>
    <svg width="40" height="33"><path d="M8 9h13v10H12v3l-3-3H8z" fill="#111"/><path d="M10 12h9M10 15h6" stroke="#eee"/><circle cx="20" cy="22" r="6.500" fill="#cfcac3" stroke="#777" stroke-width=".8"/><text x="17.300" y="25.600" font-size="9.500" fill="#222">2</text></svg>
   </div>
  </section>
  <section class="tiles">
   <div class="tile talk d-flex justify-content-center"><div class="av c-brown rounded-circle d-flex align-items-center justify-content-center">S</div><div class="corn c-blue rounded-circle d-flex align-items-center justify-content-center"><svg width="26" height="8" fill="#fff"><circle cx="4" cy="4" r="3.200"/><circle cx="13" cy="4" r="3.200"/><circle cx="22" cy="4" r="3.200"/></svg></div><div class="nm">Sunandita Debnath</div></div>
   <div class="tile d-flex justify-content-center"><div class="av c-orange rounded-circle d-flex align-items-center justify-content-center">P</div><div class="corn rounded-circle d-flex align-items-center justify-content-center"><svg width="27" height="27"><use href="#micoff"/></svg></div><div class="nm">PARMAR HET</div></div>
   <div class="tile d-flex justify-content-center"><div class="av c-violet rounded-circle d-flex align-items-center justify-content-center">A</div><div class="corn rounded-circle d-flex align-items-center justify-content-center"><svg width="27" height="27"><use href="#micoff"/></svg></div><div class="nm">ARCHIT VERMA</div></div>
   <div class="tile d-flex justify-content-center"><div class="av c-pink rounded-circle d-flex align-items-center justify-content-center">R</div><div class="corn rounded-circle d-flex align-items-center justify-content-center"><svg width="27" height="27"><use href="#micoff"/></svg></div><div class="nm">RAJ JIGNESHKUM...</div></div>
   <div class="tile d-flex justify-content-center"><div class="av c-indigo rounded-circle d-flex align-items-center justify-content-center">A</div><div class="corn rounded-circle d-flex align-items-center justify-content-center"><svg width="27" height="27"><use href="#micoff"/></svg></div><div class="nm">ANISH KUMAR</div></div>
   <div class="tile d-flex justify-content-center"><div class="av c-rust rounded-circle d-flex align-items-center justify-content-center">A</div><div class="corn rounded-circle d-flex align-items-center justify-content-center"><svg width="27" height="27"><use href="#micoff"/></svg></div><div class="nm">AYUSH KUMAR A...</div></div>
   <div class="tile d-flex justify-content-center"><div class="av c-deep rounded-circle d-flex align-items-center justify-content-center">P</div><div class="corn rounded-circle d-flex align-items-center justify-content-center"><svg width="27" height="27"><use href="#micoff"/></svg></div><div class="nm">PRATHAMESH SRI...</div></div>
   <div class="tile d-flex flex-column align-items-center"><div class="pair d-flex"><span class="mini c-teal rounded-circle d-flex align-items-center justify-content-center">P</span><span class="mini c-tan rounded-circle d-flex align-items-center justify-content-center">K</span></div><div class="oth">109 others</div></div>
   <div class="tile d-flex justify-content-center"><div class="av c-green rounded-circle d-flex align-items-center justify-content-center">S</div><div class="corn rounded-circle d-flex align-items-center justify-content-center"><svg width="27" height="27"><use href="#micoff"/></svg></div><div class="nm">You</div></div>
  </section>
 </div>
 <footer class="callbar d-flex align-items-center">
  <div class="clock d-flex align-items-center">11:03 AM<svg class="mx-3" width="4" height="24"><path d="M2 0v24" stroke="#74777b" stroke-width="1.500"/></svg>EC100_Sec2</div>
  <div class="ctrls d-flex">
   <div class="ctl off rounded-circle d-flex align-items-center justify-content-center"><svg width="29" height="29"><use href="#micoff"/></svg></div>
   <div class="ctl off rounded-circle d-flex align-items-center justify-content-center"><svg width="28" height="26" fill="none" stroke="#fff" stroke-width="2.400"><path d="M3 5v18h19v-4M9 3h12v7M2 2l23 22"/><path d="M20 13l6-6v13z" fill="#fff" stroke="none"/></svg></div>
   <div class="ctl rounded-circle d-flex align-items-center justify-content-center"><svg width="28" height="24" fill="none" stroke="#fff" stroke-width="2.500"><rect x="1.500" y="1.500" width="25" height="21" rx="1.500"/><path d="M12 10V8.500H6.500v7H12V14M22 10V8.500h-5.500v7H22V14" stroke-width="2.200"/></svg></div>
   <div class="ctl rounded-circle d-flex align-items-center justify-content-center"><svg width="30" height="38" fill="none" stroke="#fff" stroke-width="2.500" stroke-linejoin="round"><path d="M8 23V9q0-2 1.800-2t1.700 2v9V5q0-3 2.500-3T17 5v13V6q0-2 2-2t2 2v13V11q0-2 2.500-2t2.500 2v14q0 11-10 11-6 0-9-6L2.500 19q0-2 2.500-1z"/></svg></div>
   <div class="ctl rounded-circle d-flex align-items-center justify-content-center"><svg width="34" height="28" fill="none" stroke="#fff" stroke-width="3"><rect x="1.500" y="1.500" width="31" height="25" rx="1.500"/><path d="M17 21v-8"/><path d="M10.500 14L17 7l6.500 7z" fill="#fff" stroke="none"/></svg></div>
   <div class="ctl rounded-circle d-flex align-items-center justify-content-center"><svg width="10" height="28" fill="#fff"><circle cx="5" cy="5" r="3.300"/><circle cx="5" cy="14" r="3.300"/><circle cx="5" cy="23" r="3.300"/></svg></div>
   <div class="hang d-flex align-items-center justify-content-center"><svg width="38" height="16"><path d="M1 8q18-15 36 0l-6 6q-2 0-6-3V6q-6-2-12 0v5q-4 3-6 3z" fill="#fff"/></svg></div>
  </div>
  <div class="side d-flex ms-auto">
   <svg width="34" height="34" fill="none" stroke="#fff" stroke-width="3"><circle cx="17" cy="17" r="14"/><path d="M17 15v9M17 9.500v3.500" stroke-width="3.600"/></svg>
   <svg width="36" height="34" fill="none" stroke="#fff" stroke-width="3"><circle cx="14" cy="12" r="5.500"/><path d="M2.500 27.500v-2q4-5 11.500-5t11.500 5v2z"/><path d="M21 5q8 0 8 7t-8 7q5-7 0-14zM25 20q9 1 10 6v3h-6q1-5-4-9z" fill="#fff" stroke="none"/></svg>
   <svg width="34" height="34" fill="none" stroke="#fff" stroke-width="2.700"><path d="M2.500 30V3.500h28v21H8z"/><path d="M7 9h19M7 14h19M7 18.500h13"/></svg>
   <svg width="34" height="34" fill="none" stroke="#fff" stroke-width="3"><path d="M17 5l-6 10h12zM4.500 20h9v9h-9z"/><circle cx="25" cy="25" r="6"/></svg>
  </div>
  <div class="cnt rounded-circle d-flex align-items-center justify-content-center">118</div>
  <div class="wm"><div class="wm1">Activate Windows</div><div class="wm2">Go to Settings to activate Windows.</div></div>
 </footer>
</main>
</div>
</body>
</html>
